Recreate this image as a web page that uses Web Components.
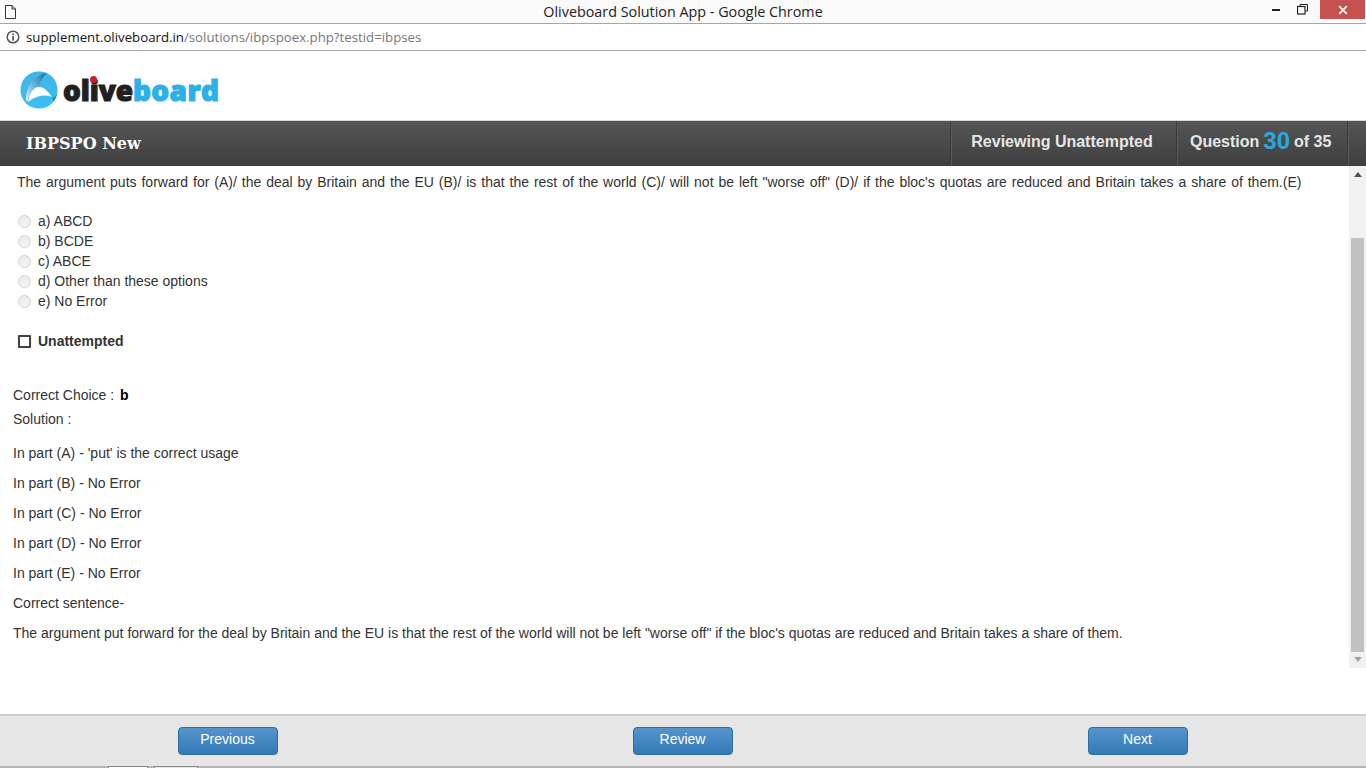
<!DOCTYPE html>
<html><head><meta charset="utf-8"><title>Oliveboard Solution App</title>
<style>
html,body{margin:0;padding:0;height:100%;background:#fff;overflow:hidden}
body{font-family:"Liberation Sans",Arial,sans-serif;font-size:14px;color:#333;display:flex;flex-direction:column;height:768px}
</style></head><body>
<chrome-title title-text="Oliveboard Solution App - Google Chrome"></chrome-title>
<chrome-url host="supplement.oliveboard.in" path="/solutions/ibpspoex.php?testid=ibpses"></chrome-url>
<site-brand></site-brand>
<exam-header exam="IBPSPO New" status="Reviewing Unattempted" current="30" total="35"></exam-header>
<solution-pane>
  <div slot="question">The argument puts forward for (A)/ the deal by Britain and the EU (B)/ is that the rest of the world (C)/ will not be left "worse off" (D)/ if the bloc's quotas are reduced and Britain takes a share of them.(E)</div>
  <answer-option slot="options">a) ABCD</answer-option>
  <answer-option slot="options">b) BCDE</answer-option>
  <answer-option slot="options">c) ABCE</answer-option>
  <answer-option slot="options">d) Other than these options</answer-option>
  <answer-option slot="options">e) No Error</answer-option>
  <span slot="status">Unattempted</span>
  <span slot="choice">b</span>
  <p slot="solution">In part (A) - 'put' is the correct usage</p>
  <p slot="solution">In part (B) - No Error</p>
  <p slot="solution">In part (C) - No Error</p>
  <p slot="solution">In part (D) - No Error</p>
  <p slot="solution">In part (E) - No Error</p>
  <p slot="solution">Correct sentence-</p>
  <p slot="solution">The argument put forward for the deal by Britain and the EU is that the rest of the world will not be left "worse off" if the bloc's quotas are reduced and Britain takes a share of them.</p>
</solution-pane>
<nav-footer></nav-footer>
<script>
function def(name,css,html){
  customElements.define(name,class extends HTMLElement{
    connectedCallback(){
      if(this.shadowRoot)return;
      const r=this.attachShadow({mode:'open'});
      r.innerHTML='<style>'+css+'</style>'+(typeof html==='function'?html(this):html);
    }
  });
}
const att=(e,n)=>e.getAttribute(n)||'';
def('chrome-title',`
:host{display:flex;flex:none;height:23px;background:#fafafa;border-bottom:1px solid #a6a6a6;align-items:center;font-family:"Open Sans","Noto Sans",sans-serif;font-size:14.35px;color:#222}
.doc{margin-left:5px;flex:none;display:block}
.t{flex:1;text-align:center;padding-left:87px;white-space:nowrap}
.ctl{display:flex;flex:none;align-items:flex-start;align-self:flex-start}
.b{width:26px;height:19px;display:flex;align-items:center;justify-content:center}
.x{width:45px;background:#c75050;margin-left:5px;margin-right:1px}
`,e=>`<svg class="doc" width="11" height="14" viewBox="0 0 11 14"><path d="M.5.5h6.5l3.500 3.500v9.500H.5z M7 .5V4h3.500" fill="#fff" stroke="#333" stroke-width="1"/></svg>
<div class="t">${att(e,'title-text')}</div>
<div class="ctl">
<div class="b"><svg width="9" height="3" viewBox="0 0 9 3"><rect y="1" width="8" height="2" fill="#222"/></svg></div>
<div class="b"><svg width="11" height="11" viewBox="0 0 11 11"><path d="M3 2.500V.5h7.500V7H8.500" fill="none" stroke="#222"/><rect x=".5" y="2.500" width="7.500" height="7.500" fill="none" stroke="#222" stroke-width="1.2"/></svg></div>
<div class="b x"><svg width="10" height="10" viewBox="0 0 10 10"><path d="M1.200 1.200l7.600 7.600M8.800 1.200L1.200 8.800" stroke="#fff" stroke-width="1.800"/></svg></div>
</div>`);
def('chrome-url',`
:host{display:flex;flex:none;height:26px;background:#fff;border-bottom:1px solid #a6a6a6;align-items:center;font-family:"Open Sans","Noto Sans",sans-serif;font-size:13.24px;color:#111}
svg{margin:0 6px;flex:none}
i{font-style:normal;color:#777}
`,e=>`<svg width="14" height="14" viewBox="0 0 14 14"><circle cx="7" cy="7" r="5.800" fill="none" stroke="#555" stroke-width="1.500"/><rect x="6.200" y="6" width="1.700" height="4.600" fill="#555"/><rect x="6.200" y="3.400" width="1.700" height="1.700" fill="#555"/></svg><span>${att(e,'host')}<i>${att(e,'path')}</i></span>`);
def('site-brand',`
:host{display:flex;flex:none;height:69px;align-items:flex-start;padding:20px 0 0 20px;box-sizing:border-box;background:#fff}
.wrap{display:flex;align-items:center;position:relative;height:38px}
.word{font-family:"Open Sans","DejaVu Sans",sans-serif;font-weight:800;font-size:28px;line-height:30px;letter-spacing:-.1px;margin-left:5px;margin-top:-1px;-webkit-text-stroke:1.1px currentColor;white-space:nowrap;color:#231f20}
.word b{color:#2cb0e8;font-weight:800;letter-spacing:.4px}
.dot{position:absolute;left:70px;top:5px;width:7px;height:7px;border-radius:50%;background:#c8202f}
`,`<div class="wrap"><svg width="38" height="38" viewBox="0 0 38 38">
<defs><linearGradient id="g" x1="0" y1="0" x2="0" y2="1"><stop offset="0" stop-color="#3fb4e6"/><stop offset="1" stop-color="#3cc0f2"/></linearGradient>
<linearGradient id="g2" x1="1" y1="0" x2="0" y2="1"><stop offset="0" stop-color="#0e6c9e"/><stop offset=".55" stop-color="#6fb7da"/><stop offset="1" stop-color="#e6f4fb"/></linearGradient></defs>
<circle cx="19" cy="19" r="18.600" fill="url(#g)"/>
<path d="M27 2C15 4 6 14 6 28l1 3C9 24 13 17 19 16 20 10 23 6 27 2z" fill="url(#g2)"/>
<path d="M8 31C9 24 13 16 19 16 25 16 28 21 32 26 24 23 15 25 8 31z" fill="#fff"/>
<path d="M32 26c2 .5 3.500-.5 5-3-.5 3-1.800 5.500-3.500 7.500-1-1.500-1-3-1.500-4.500z" fill="#1c8fc8"/>
</svg><div class="word">olive<b>board</b></div><span class="dot"></span></div>`);
def('exam-header',`
:host{display:flex;flex:none;height:46px;box-sizing:border-box;background:linear-gradient(#555,#3f3f3f);border-top:1px solid #d8d8d8;color:#f0f0f0;align-items:stretch}
.name{flex:1;padding-left:26px;font:bold 16px/45px "DejaVu Serif",serif;color:#fff;white-space:nowrap}
.cell{border-left:1px solid #3a3a3a;box-shadow:inset 1px 0 0 #5a5a5a;display:flex;align-items:center;font-weight:bold;font-size:16px;font-family:"Liberation Sans",sans-serif;color:#e6e6e6;white-space:nowrap;box-sizing:border-box}
.s{width:226px;justify-content:center;padding:0 3px 4px 0}
.q{width:171px;padding-left:13px;padding-bottom:4px}
.q b{font-size:24px;color:#2ca7e0;margin:0 4px;position:relative;top:-1px}
.end{width:19px;padding:0}
`,e=>`<div class="name">${att(e,'exam')}</div><div class="cell s">${att(e,'status')}</div><div class="cell q">Question <b>${att(e,'current')}</b> of ${att(e,'total')}</div><div class="cell end"></div>`);
def('answer-option',`
:host{display:flex;height:20px;align-items:center;font-size:14px;color:#333}
.r{width:11px;height:11px;border-radius:50%;border:1px solid #d2d2d2;background:linear-gradient(#ebebeb,#f4f4f4);margin:1px 7px 0 0;flex:none}
`,`<span class="r"></span><slot></slot>`);
def('solution-pane',`
:host{display:block;flex:none;height:548px;position:relative;overflow:hidden;background:#fff;font-size:14px;color:#333}
.body{width:1349px;box-sizing:border-box;padding:6px 0 0 13px;line-height:20px}
.q{padding-left:4px;word-spacing:1.02px;white-space:nowrap}
.opts{margin:19px 0 0 5px;display:block}
.st{display:flex;align-items:center;margin:20px 0 0 5px;height:20px;font-weight:bold}
.box{width:9px;height:9px;border:2px solid #444;margin-right:7px;margin-top:1px;border-radius:1px;box-shadow:0 0 1px #888}
.cc{margin-top:34px;height:24px;line-height:20px}
.cc b{color:#000;margin-left:2px}
.sl{height:24px;line-height:20px}
::slotted(p){margin:0 0 10px;line-height:20px}
.sol{padding-top:10px}
.sb{position:absolute;right:0;top:0;width:17px;height:502px;background:#f1f1f1;display:flex;flex-direction:column;justify-content:space-between;align-items:center}
.th{position:absolute;left:2px;width:13px;top:72px;height:414px;background:#c1c1c1}
.ar{width:0;height:0;border-left:4px solid transparent;border-right:4px solid transparent;margin:6px 0}
.up{border-bottom:5px solid #505050}
.dn{border-top:5px solid #a3a3a3}
`,`<div class="body"><div class="q"><slot name="question"></slot></div>
<div class="opts"><slot name="options"></slot></div>
<div class="st"><span class="box"></span><slot name="status"></slot></div>
<div class="cc">Correct Choice : <b><slot name="choice"></slot></b></div>
<div class="sl">Solution :</div>
<div class="sol"><slot name="solution"></slot></div></div>
<div class="sb"><span class="ar up"></span><span class="th"></span><span class="ar dn"></span></div>`);
def('nav-btn',`
:host{display:block;width:100px;height:28px;box-sizing:border-box;border:1px solid #2e6da4;border-radius:4px;background:linear-gradient(#5694cd,#337ab7);color:#fff;font-size:14px;text-align:center;line-height:22px;padding-right:1px}
`,`<slot></slot>`);
def('nav-footer',`
:host{display:flex;flex:none;height:54px;box-sizing:border-box;background:#e6e6e6;border-top:2px solid #cdcdcd;border-bottom:2px solid #b5b5b5;padding:11px 178px 0;justify-content:space-between;align-items:flex-start;position:relative}
.tab{position:absolute;bottom:-2px;height:1px;background:#fff;border:1px solid #888;border-bottom:0}
`,`<nav-btn>Previous</nav-btn><nav-btn>Review</nav-btn><nav-btn>Next</nav-btn><span class="tab" style="left:108px;width:38px"></span><span class="tab" style="left:154px;width:42px;background:#e6e6e6"></span>`);
</script>
</body></html>
